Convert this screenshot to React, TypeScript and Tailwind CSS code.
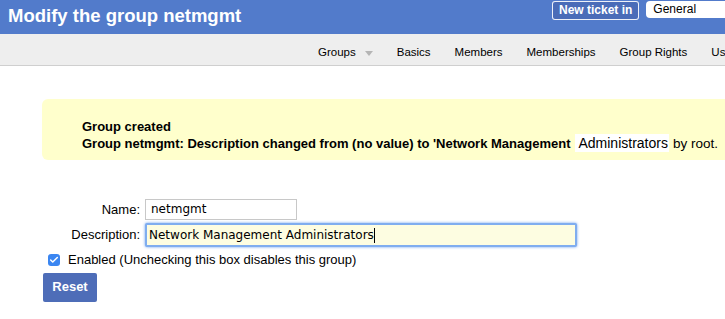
import { Check } from "lucide-react"

const navItems = ["Basics", "Members", "Memberships", "Group Rights", "User Rights"]

const App = () => {
  return (
    <div className="w-[725px] h-[319px] overflow-hidden bg-white font-['Liberation_Sans',Arial,sans-serif] text-black">
      {/* top bar */}
      <header className="h-[34px] bg-[#527bcb] flex items-start justify-between">
        <h1 className="pl-2 pt-[5px] text-[18.5px] leading-[21px] font-bold text-white whitespace-nowrap">Modify the group netmgmt</h1>
        <div className="flex items-start gap-[7px] pt-[1px] w-[173px] shrink-0">
          <button className="h-[19px] px-[6px] border border-white/90 rounded-[3px] bg-[#4a6cb8] text-white text-[12px] font-bold leading-[17px] whitespace-nowrap">
            New ticket in
          </button>
          <div className="h-[17px] flex-1 bg-white rounded-l-[4px] pl-[7px] text-[12px] leading-[17px] mr-[-20px]">General</div>
        </div>
      </header>

      {/* page menu */}
      <nav className="h-[32px] bg-[#eeeeee] border-b border-[#cfcfcf] flex items-center pt-[7px] pl-[318px] gap-[24px] text-[11.5px] whitespace-nowrap overflow-hidden">
        <span className="flex items-center gap-[9px]">
          Groups
          <span className="w-0 h-0 border-l-[4px] border-r-[4px] border-t-[5px] border-l-transparent border-r-transparent border-t-[#b5b5b5]" />
        </span>
        {navItems.map((item) => (
          <span key={item}>{item}</span>
        ))}
      </nav>

      {/* result message */}
      <div className="mt-[33px] ml-[42px] w-[720px] rounded-[6px] bg-[#ffffcc] pt-[20px] pb-[9px] pl-[40px] text-[13px] leading-[16px] whitespace-nowrap">
        <div className="font-bold">Group created</div>
        <div className="h-[16px]">
          <span className="font-bold">Group netmgmt: Description changed from (no value) to 'Network Management</span>
          <span className="ml-[5px] mr-[4px] bg-white pl-[3px] pr-[1px] py-[1px] text-[14px]">Administrators</span>
          <span className="text-[13.5px]">by root.</span>
        </div>
      </div>

      {/* form */}
      <div className="mt-[39px] grid grid-cols-[141px_auto] gap-x-[4px] gap-y-[3px] items-center text-[13px]">
        <label className="text-right pr-[1px]">Name:</label>
        <div className="w-[152px] h-[21px] border border-[#c8c8c8] pl-[5px] font-['DejaVu_Sans',Verdana,sans-serif] text-[12px] leading-[19px]">netmgmt</div>
        <label className="text-right pr-[1px]">Description:</label>
        <div className="w-[432px] h-[24px] border-2 border-[#7fadef] rounded-[2px] shadow-[0_0_3px_#6aa0f0] bg-[#fdfde1] pl-[2px] font-['DejaVu_Sans',Verdana,sans-serif] text-[12px] leading-[20px] flex items-center">
          Network Management Administrators
          <span className="w-px h-[15px] bg-black" />
        </div>
      </div>

      <label className="mt-[3px] ml-[48px] flex items-center gap-[8px] text-[13px]">
        <span className="w-[12px] h-[12px] rounded-[3px] bg-[#3b86f1] flex items-center justify-center">
          <Check size={10} strokeWidth={3.5} className="text-white" />
        </span>
        Enabled (Unchecking this box disables this group)
      </label>

      <button className="mt-[3px] ml-[43px] w-[54px] h-[29px] rounded-[2px] bg-[#4e6db8] text-white text-[13px] font-bold">
        Reset
      </button>
    </div>
  )
}

export default App
